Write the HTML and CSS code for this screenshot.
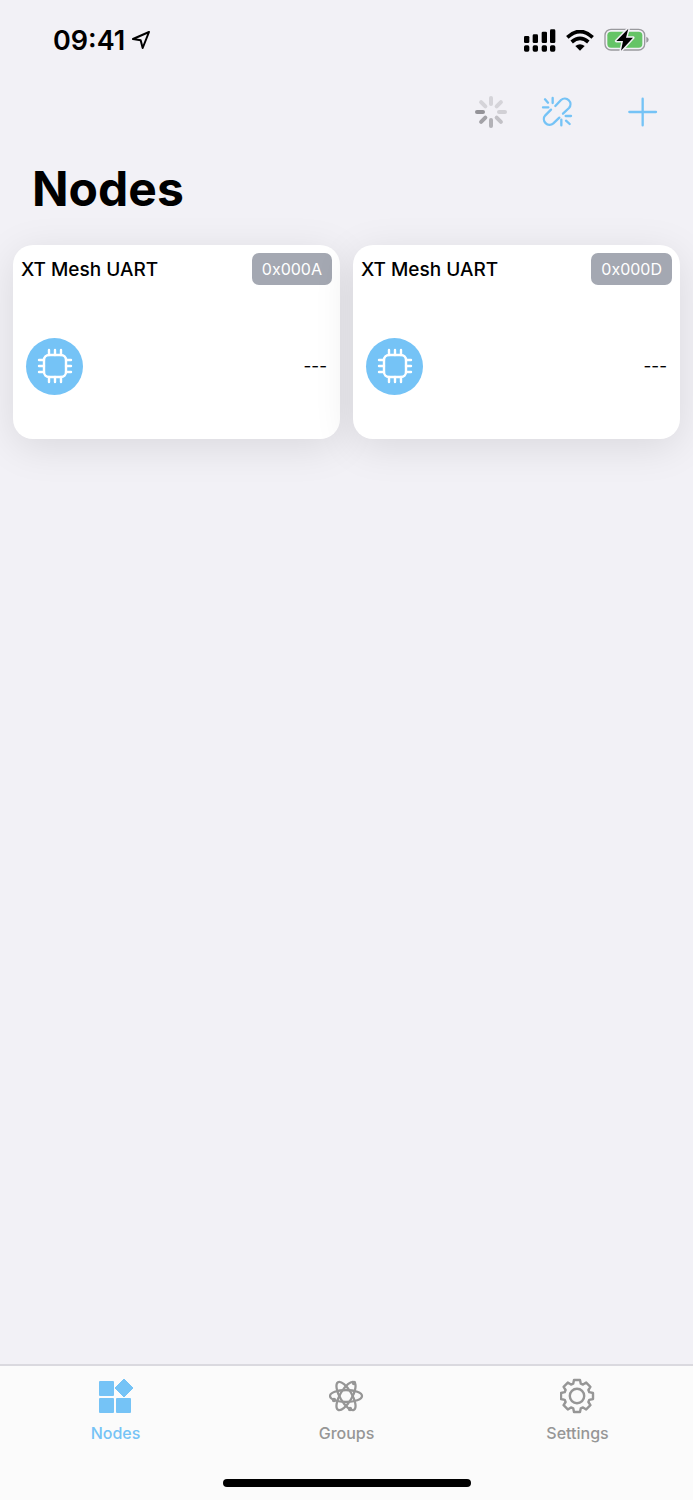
FILE: index.html
```html
<!DOCTYPE html>
<html lang="en">
<head>
    <meta charset="UTF-8">
    <meta name="viewport" content="width=device-width, initial-scale=1.0">
    <title>Nodes</title>
    <link rel="stylesheet" href="styles.css">
</head>
<body>
    <div class="status-bar">
        <div class="status-time">
            <span>09:41</span>
            <svg class="location-icon" viewBox="0 0 60 60" aria-hidden="true">
                <path d="M54 6 L6 27 L29 31 L35 54 Z" fill="none" stroke="#000" stroke-width="6" stroke-linejoin="round"/>
            </svg>
        </div>
        <div class="status-icons">
            <svg class="signal-icon" viewBox="0 0 96 69" aria-hidden="true">
                <rect x="0" y="21" width="16" height="21" rx="4"/>
                <rect x="26" y="16" width="16" height="26" rx="4"/>
                <rect x="53" y="8" width="16" height="34" rx="4"/>
                <rect x="78" y="1" width="16" height="41" rx="4"/>
                <rect x="0" y="49" width="16" height="19" rx="5"/>
                <rect x="26" y="49" width="16" height="19" rx="5"/>
                <rect x="53" y="49" width="16" height="19" rx="5"/>
                <rect x="78" y="49" width="16" height="19" rx="5"/>
            </svg>
            <svg class="wifi-icon" viewBox="0 0 84 63" aria-hidden="true">
                <path d="M4 22 Q42 -13 80 22" fill="none" stroke="#000" stroke-width="11"/>
                <path d="M17 36 Q42 14 67 36" fill="none" stroke="#000" stroke-width="11"/>
                <path d="M28 48 Q42 37 56 48 L42 62 Z"/>
            </svg>
            <svg class="battery-icon" viewBox="0 0 135 72" aria-hidden="true">
                <rect x="3" y="4" width="119" height="62" rx="18" fill="none" stroke="#99999d" stroke-width="4"/>
                <rect x="10" y="11" width="105" height="48" rx="11" fill="#65c466"/>
                <path d="M127 26 Q134 29 134 35 Q134 41 127 44 Z" fill="#99999d"/>
                <path d="M73 2 L37 39 L57 39 L51 68 L87 29 L66 29 Z" fill="#000" stroke="#f2f1f6" stroke-width="9" stroke-linejoin="round" paint-order="stroke"/>
            </svg>
        </div>
    </div>

    <header class="header">
        <div class="toolbar">
            <svg class="spinner" viewBox="-16 -16 32 32" role="img" aria-label="Loading">
                <g stroke-width="4" stroke-linecap="round">
                    <line y1="-14" y2="-8" stroke="#d5d4d9"/>
                    <line y1="-14" y2="-8" stroke="#d5d4d9" transform="rotate(45)"/>
                    <line y1="-14" y2="-8" stroke="#d1d0d5" transform="rotate(90)"/>
                    <line y1="-14" y2="-8" stroke="#c2c1c6" transform="rotate(135)"/>
                    <line y1="-14" y2="-8" stroke="#b3b2b7" transform="rotate(180)"/>
                    <line y1="-14" y2="-8" stroke="#a3a2a7" transform="rotate(225)"/>
                    <line y1="-14" y2="-8" stroke="#949398" transform="rotate(270)"/>
                    <line y1="-14" y2="-8" stroke="#d5d4d9" transform="rotate(315)"/>
                </g>
            </svg>
            <button class="icon-btn unlink-btn" type="button" aria-label="Disconnect">
                <svg viewBox="0 0 96 96" aria-hidden="true">
                    <path d="M43 30 L60 12 A17 17 0 0 1 84 36 L66 53 M30 41 L13 58 A17 17 0 0 0 37 82 L55 65 M12 10 L21 20 M35 6 V21 M6 34 H22 M74 60 H90 M61 71 V88 M75 74 L86 84"/>
                </svg>
            </button>
            <button class="icon-btn" type="button" aria-label="Add node">
                <svg viewBox="0 0 96 96" aria-hidden="true">
                    <path d="M47 8 V88 M7 48 H87"/>
                </svg>
            </button>
        </div>
        <h1>Nodes</h1>
    </header>

    <main class="node-grid">
        <article class="node-card">
            <div class="node-top">
                <h2>XT Mesh UART</h2>
                <span class="node-address">0x000A</span>
            </div>
            <div class="node-body">
                <span class="node-icon">
                    <svg viewBox="-18 -18 36 36" aria-hidden="true">
                        <rect x="-11" y="-11" width="22" height="22" rx="5"/>
                        <path d="M-6 -11 V-16 M0 -11 V-16 M6 -11 V-16 M-6 11 V16 M0 11 V16 M6 11 V16 M-11 -6 H-16 M-11 0 H-16 M-11 6 H-16 M11 -6 H16 M11 0 H16 M11 6 H16"/>
                    </svg>
                </span>
                <span class="node-value">---</span>
            </div>
        </article>

        <article class="node-card">
            <div class="node-top">
                <h2>XT Mesh UART</h2>
                <span class="node-address">0x000D</span>
            </div>
            <div class="node-body">
                <span class="node-icon">
                    <svg viewBox="-18 -18 36 36" aria-hidden="true">
                        <rect x="-11" y="-11" width="22" height="22" rx="5"/>
                        <path d="M-6 -11 V-16 M0 -11 V-16 M6 -11 V-16 M-6 11 V16 M0 11 V16 M6 11 V16 M-11 -6 H-16 M-11 0 H-16 M-11 6 H-16 M11 -6 H16 M11 0 H16 M11 6 H16"/>
                    </svg>
                </span>
                <span class="node-value">---</span>
            </div>
        </article>
    </main>

    <footer class="tab-bar">
        <nav class="tabs">
            <a class="tab active" href="#nodes">
                <svg viewBox="-18 -18 36 36" aria-hidden="true">
                    <g fill="currentColor">
                        <rect x="-17" y="-15" width="15" height="15" rx="1"/>
                        <rect x="-17" y="2" width="15" height="15" rx="1"/>
                        <rect x="0" y="2" width="15" height="15" rx="1"/>
                        <path d="M8 -17 L17 -8 L8 1 L-1 -8 Z" stroke="currentColor" stroke-width="1" stroke-linejoin="round"/>
                    </g>
                </svg>
                <span>Nodes</span>
            </a>
            <a class="tab" href="#groups">
                <svg viewBox="-17 -18 36 36" aria-hidden="true">
                    <g fill="none" stroke="currentColor" stroke-width="2.3">
                        <ellipse rx="16" ry="6"/>
                        <ellipse rx="16" ry="6" transform="rotate(60)"/>
                        <ellipse rx="16" ry="6" transform="rotate(120)"/>
                    </g>
                    <g fill="currentColor">
                        <circle cx="-12" cy="4" r="2.2"/>
                        <circle cx="8" cy="-13" r="2.2"/>
                        <circle cx="4" cy="13" r="2.2"/>
                    </g>
                </svg>
                <span>Groups</span>
            </a>
            <a class="tab" href="#settings">
                <svg viewBox="-17 -18 36 36" aria-hidden="true">
                    <g fill="none" stroke="currentColor" stroke-width="2.4" stroke-linejoin="round">
                        <path d="M-3.8 -12.3 L-3 -16 L3 -16 L3.8 -12.3 L6 -11.4 L9.2 -13.4 L13.4 -9.2 L11.4 -6 L12.3 -3.8 L16 -3 L16 3 L12.3 3.8 L11.4 6 L13.4 9.2 L9.2 13.4 L6 11.4 L3.8 12.3 L3 16 L-3 16 L-3.8 12.3 L-6 11.4 L-9.2 13.4 L-13.4 9.2 L-11.4 6 L-12.3 3.8 L-16 3 L-16 -3 L-12.3 -3.8 L-11.4 -6 L-13.4 -9.2 L-9.2 -13.4 L-6 -11.4 Z"/>
                        <circle r="7.2"/>
                    </g>
                </svg>
                <span>Settings</span>
            </a>
        </nav>
        <div class="home-indicator"></div>
    </footer>
</body>
</html>
```

FILE: styles.css
```css
* {
    margin: 0;
    padding: 0;
    box-sizing: border-box;
}

body {
    display: flex;
    flex-direction: column;
    min-height: 100vh;
    font-family: Inter, sans-serif;
    background-color: #f2f1f6;
    color: #000;
}

svg {
    display: block;
    flex: none;
}

.status-bar {
    display: flex;
    align-items: center;
    justify-content: space-between;
    height: 80px;
    padding: 0 44px 0 53px;
}

.status-time {
    display: flex;
    align-items: center;
    gap: 6px;
    font-size: 27px;
    font-weight: 600;
}

.location-icon {
    width: 20px;
    height: 20px;
}

.status-icons {
    display: flex;
    align-items: center;
    gap: 10px;
}

.signal-icon {
    width: 32px;
    height: 23px;
}

.wifi-icon {
    width: 28px;
    height: 21px;
}

.battery-icon {
    width: 45px;
    height: 24px;
}

.header {
    padding: 16px 34px 0 32px;
}

.toolbar {
    display: flex;
    align-items: center;
    justify-content: flex-end;
    height: 32px;
}

.spinner {
    width: 32px;
    height: 32px;
    margin-right: 34px;
}

.icon-btn {
    border: none;
    background: none;
    cursor: pointer;
}

.icon-btn svg {
    width: 32px;
    height: 32px;
    fill: none;
    stroke: #75c3f6;
    stroke-width: 7;
    stroke-linecap: round;
    stroke-linejoin: round;
}

.unlink-btn {
    margin-right: 54px;
}

.header h1 {
    margin-top: 31px;
    font-size: 48px;
    font-weight: 700;
    line-height: 60px;
}

.node-grid {
    display: grid;
    grid-template-columns: 1fr 1fr;
    gap: 13px;
    padding: 26px 13px;
}

.node-card {
    display: flex;
    flex-direction: column;
    height: 194px;
    padding: 8px;
    background-color: #fff;
    border-radius: 20px;
    box-shadow: 0 8px 40px rgba(0, 0, 0, 0.1);
}

.node-top {
    display: flex;
    align-items: center;
    justify-content: space-between;
}

.node-top h2 {
    font-size: 19px;
    font-weight: 500;
}

.node-address {
    padding: 0 10px;
    font-size: 16px;
    line-height: 32px;
    color: #fff;
    background-color: #a4a8b2;
    border-radius: 7px;
}

.node-body {
    display: flex;
    flex: 1;
    align-items: center;
    justify-content: space-between;
    padding: 16px 5px 0;
}

.node-icon {
    display: flex;
    align-items: center;
    justify-content: center;
    width: 57px;
    height: 57px;
    background-color: #75c3f6;
    border-radius: 50%;
}

.node-icon svg {
    width: 36px;
    height: 36px;
    fill: none;
    stroke: #fff;
    stroke-width: 2.4;
    stroke-linecap: round;
}

.node-value {
    font-size: 17px;
}

.tab-bar {
    margin-top: auto;
    padding-bottom: 13px;
    background-color: #fbfbfb;
    border-top: 2px solid #dad9df;
}

.tabs {
    display: grid;
    grid-template-columns: repeat(3, 1fr);
}

.tab {
    display: flex;
    flex-direction: column;
    align-items: center;
    gap: 9px;
    height: 113px;
    padding-top: 12px;
    font-size: 16px;
    font-weight: 500;
    line-height: 20px;
    color: #969696;
    text-decoration: none;
}

.tab svg {
    width: 36px;
    height: 36px;
}

.tab.active {
    color: #75c3f6;
}

.home-indicator {
    width: 248px;
    height: 8px;
    margin: 0 auto;
    background-color: #000;
    border-radius: 4px;
}
```
